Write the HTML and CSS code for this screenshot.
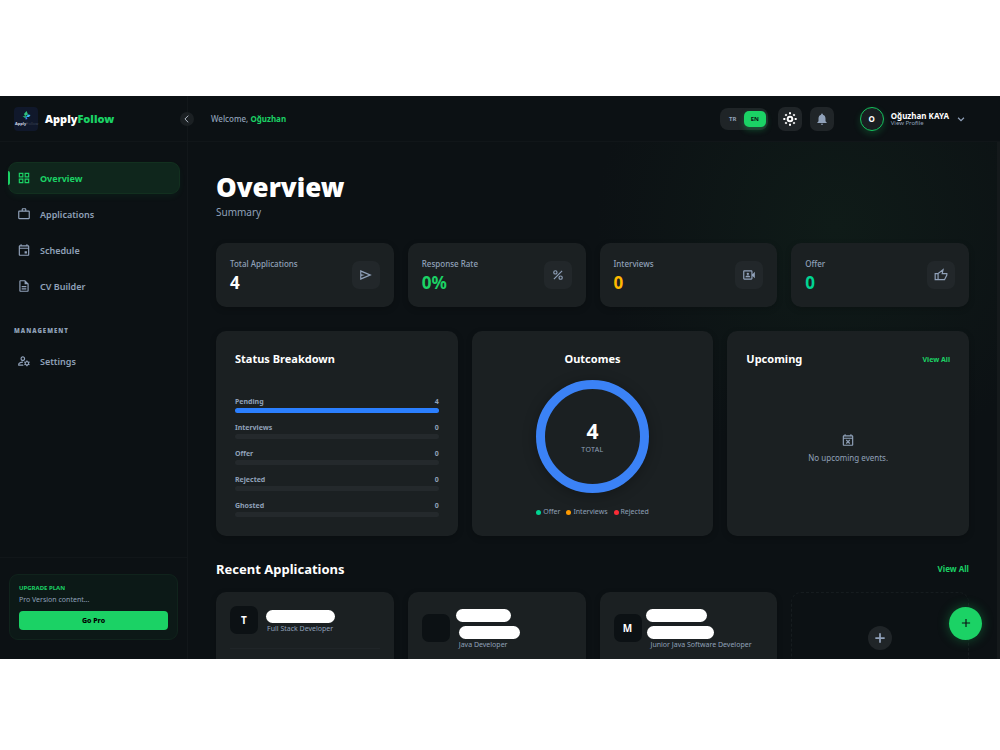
FILE: index.html
```html
<!DOCTYPE html>
<html lang="en">
<head>
  <meta charset="UTF-8">
  <meta name="viewport" content="width=device-width, initial-scale=1">
  <title>ApplyFollow - Overview</title>
  <link rel="stylesheet" href="styles.css">
</head>
<body>
  <div class="app">
    <aside class="sidebar">
      <div class="brand">
        <div class="brand-logo">
          <svg viewBox="0 0 24 24" width="24" height="24">
            <path d="M12.500 4l1.500 3.500-3 1.500-1-2z" fill="#2fc47c"/>
            <path d="M14 7.500l2.500 .5-1.500 2h-3z" fill="#38bdf8"/>
            <path d="M8.500 9h4l-1 2.500z" fill="#22a06b"/>
            <path d="M12 9l1.500 3-2 .5z" fill="#3b82f6"/>
          </svg>
          <span class="brand-mini"><b>Apply</b>Follow</span>
        </div>
        <span class="brand-name">Apply<span class="green">Follow</span></span>
        <button class="collapse" aria-label="Collapse sidebar">
          <svg viewBox="0 0 24 24" width="10" height="10" class="line"><path d="M15 4l-8 8 8 8"/></svg>
        </button>
      </div>

      <nav class="nav">
        <a href="#" class="nav-item active">
          <svg viewBox="0 0 24 24" width="14" height="14"><path d="M3 3v8h8V3H3zm6 6H5V5h4v4zm-6 4v8h8v-8H3zm6 6H5v-4h4v4zm4-16v8h8V3h-8zm6 6h-4V5h4v4zm-6 4v8h8v-8h-8zm6 6h-4v-4h4v4z"/></svg>
          Overview
        </a>
        <a href="#" class="nav-item">
          <svg viewBox="0 0 24 24" width="14" height="14"><path d="M14 6V4h-4v2h4zM4 8v11h16V8H4zm16-2c1.110 0 2 .89 2 2v11c0 1.110-.89 2-2 2H4c-1.110 0-2-.89-2-2V8c0-1.110.89-2 2-2h4V4c0-1.110.89-2 2-2h4c1.110 0 2 .89 2 2v2h4z"/></svg>
          Applications
        </a>
        <a href="#" class="nav-item">
          <svg viewBox="0 0 24 24" width="14" height="14"><path d="M19 4h-1V2h-2v2H8V2H6v2H5c-1.100 0-2 .9-2 2v14c0 1.100.9 2 2 2h14c1.100 0 2-.9 2-2V6c0-1.100-.9-2-2-2zm0 16H5V10h14v10zm0-12H5V6h14v2zm-6 6h4v4h-4z"/></svg>
          Schedule
        </a>
        <a href="#" class="nav-item">
          <svg viewBox="0 0 24 24" width="14" height="14"><path d="M8 16h8v2H8zm0-4h8v2H8zm6-10H6c-1.100 0-2 .9-2 2v16c0 1.100.9 2 2 2h12c1.100 0 2-.9 2-2V8l-6-6zm4 18H6V4h7v5h5v11z"/></svg>
          CV Builder
        </a>
        <h4 class="nav-label">MANAGEMENT</h4>
        <a href="#" class="nav-item">
          <svg viewBox="0 0 24 24" width="14" height="14"><path d="M4 18v-.65c0-.34.16-.66.41-.81C6.100 15.530 8.030 15 10 15h.08c.1-.7.3-1.370.59-1.980-.22-.02-.44-.03-.67-.03-2.420 0-4.680.67-6.610 1.820-.88.52-1.390 1.500-1.390 2.530V20h9.260c-.42-.6-.75-1.280-.97-2H4zM10 12c2.210 0 4-1.790 4-4s-1.790-4-4-4-4 1.790-4 4 1.790 4 4 4zm0-6c1.100 0 2 .9 2 2s-.9 2-2 2-2-.9-2-2 .9-2 2-2zM20.750 16c0-.22-.03-.42-.06-.63l1.140-1.010-1-1.730-1.450.49c-.32-.27-.68-.48-1.080-.63L18 11h-2l-.3 1.490c-.4.15-.76.36-1.080.63l-1.450-.49-1 1.730 1.140 1.010c-.03.21-.06.41-.06.63s.03.42.06.63l-1.140 1.010 1 1.730 1.450-.49c.32.27.68.48 1.080.63L16 21h2l.3-1.490c.4-.15.76-.36 1.080-.63l1.450.49 1-1.730-1.140-1.010c.03-.21.06-.41.06-.63zM17 18c-1.100 0-2-.9-2-2s.9-2 2-2 2 .9 2 2-.9 2-2 2z"/></svg>
          Settings
        </a>
      </nav>

      <div class="sidebar-foot">
        <div class="upgrade">
          <strong>UPGRADE PLAN</strong>
          <p>Pro Version content...</p>
          <button class="go-pro">Go Pro</button>
        </div>
      </div>
    </aside>

    <div class="page">
      <header class="topbar">
        <span class="welcome">Welcome, <b>Oğuzhan</b></span>
        <div class="lang">
          <button>TR</button>
          <button class="on">EN</button>
        </div>
        <button class="icon-btn light" aria-label="Theme">
          <svg viewBox="0 0 24 24" width="16" height="16" class="line bold"><circle cx="12" cy="12" r="3.500"/><path d="M12 2v3M12 19v3M2 12h3M19 12h3M5 5l2 2M17 17l2 2M5 19l2-2M17 7l2-2"/></svg>
        </button>
        <button class="icon-btn" aria-label="Notifications">
          <svg viewBox="0 0 24 24" width="14" height="14"><path d="M12 22c1.100 0 2-.9 2-2h-4c0 1.100.9 2 2 2zm6-6v-5c0-3.070-1.630-5.640-4.500-6.320V4c0-.83-.67-1.500-1.500-1.500s-1.500.67-1.500 1.500v.68C7.640 5.360 6 7.920 6 11v5l-2 2v1h16v-1l-2-2z"/></svg>
        </button>
        <a href="#" class="profile">
          <span class="avatar">O</span>
          <span class="who">
            <b>Oğuzhan KAYA</b>
            <small>View Profile</small>
          </span>
          <svg viewBox="0 0 24 24" width="10" height="10" class="line bold"><path d="M5 9l7 7 7-7"/></svg>
        </a>
      </header>

      <main class="content">
        <h1>Overview</h1>
        <p class="subtitle">Summary</p>

        <section class="stats">
          <div class="card stat">
            <div>
              <h3>Total Applications</h3>
              <strong>4</strong>
            </div>
            <span class="tile"><svg viewBox="0 0 24 24" width="14" height="14"><path d="M2 20.500v-17l20 8.500-20 8.500zm2-3.300L16.500 12 4 6.800v3.700l6 1.500-6 1.500v3.700z"/></svg></span>
          </div>
          <div class="card stat">
            <div>
              <h3>Response Rate</h3>
              <strong class="green">0%</strong>
            </div>
            <span class="tile"><svg viewBox="0 0 24 24" width="14" height="14" class="line"><circle cx="7.500" cy="7.500" r="2.800"/><circle cx="16.500" cy="16.500" r="2.800"/><path d="M19 5L5 19"/></svg></span>
          </div>
          <div class="card stat">
            <div>
              <h3>Interviews</h3>
              <strong class="amber">0</strong>
            </div>
            <span class="tile"><svg viewBox="0 0 24 24" width="14" height="14"><path d="M4 4h12c1.100 0 2 .9 2 2v4.500l4-4v11l-4-4V18c0 1.100-.9 2-2 2H4c-1.100 0-2-.9-2-2V6c0-1.100.9-2 2-2zm0 2v12h12V6H4zm2 10v-1c0-1.300 2.700-2 4-2s4 .7 4 2v1H6z"/><circle cx="10" cy="10" r="2"/></svg></span>
          </div>
          <div class="card stat">
            <div>
              <h3>Offer</h3>
              <strong class="teal">0</strong>
            </div>
            <span class="tile"><svg viewBox="0 0 24 24" width="14" height="14" class="line"><path d="M7 9.500H2V20h5M7 9.500V20h11l4-8V9.500h-8L15.500 3 7 9.500z"/></svg></span>
          </div>
        </section>

        <section class="panels">
          <div class="card panel">
            <h2>Status Breakdown</h2>
            <ul class="bars">
              <li><span>Pending</span><span>4</span><div class="bar"><i style="width: 100%"></i></div></li>
              <li><span>Interviews</span><span>0</span><div class="bar"></div></li>
              <li><span>Offer</span><span>0</span><div class="bar"></div></li>
              <li><span>Rejected</span><span>0</span><div class="bar"></div></li>
              <li><span>Ghosted</span><span>0</span><div class="bar"></div></li>
            </ul>
          </div>
          <div class="card panel outcomes">
            <h2>Outcomes</h2>
            <div class="donut">
              <strong>4</strong>
              <span>TOTAL</span>
            </div>
            <ul class="legend">
              <li class="l-offer">Offer</li>
              <li class="l-interviews">Interviews</li>
              <li class="l-rejected">Rejected</li>
            </ul>
          </div>
          <div class="card panel upcoming">
            <div class="panel-head">
              <h2>Upcoming</h2>
              <a href="#">View All</a>
            </div>
            <div class="empty">
              <svg viewBox="0 0 24 24" width="14" height="14"><path d="M19 4h-1V2h-2v2H8V2H6v2H5c-1.100 0-2 .9-2 2v14c0 1.100.9 2 2 2h14c1.100 0 2-.9 2-2V6c0-1.100-.9-2-2-2zm0 16H5V10h14v10zm0-12H5V6h14v2z"/><path d="M9 12l6 6M15 12l-6 6" stroke="currentColor" stroke-width="2"/></svg>
              <p>No upcoming events.</p>
            </div>
          </div>
        </section>

        <div class="recent-head">
          <h2>Recent Applications</h2>
          <a href="#">View All</a>
        </div>
        <section class="recent">
          <article class="card job">
            <div class="job-top">
              <span class="job-logo">T</span>
              <div class="job-info">
                <span class="redact r1"></span>
                <p>Full Stack Developer</p>
              </div>
            </div>
            <hr>
          </article>
          <article class="card job">
            <div class="job-top">
              <span class="job-logo"></span>
              <div class="job-info two">
                <span class="redact r2"></span>
                <span class="redact r3"></span>
                <p>Java Developer</p>
              </div>
            </div>
            <hr>
          </article>
          <article class="card job">
            <div class="job-top">
              <span class="job-logo">M</span>
              <div class="job-info two">
                <span class="redact r4"></span>
                <span class="redact r5"></span>
                <p>Junior Java Software Developer</p>
              </div>
            </div>
            <hr>
          </article>
          <button class="add-new">
            <span><svg viewBox="0 0 24 24" width="14" height="14" class="line bold"><path d="M12 4v16M4 12h16"/></svg></span>
            New
          </button>
        </section>
      </main>
    </div>

    <button class="fab" aria-label="Add application">
      <svg viewBox="0 0 24 24" width="14" height="14" class="line"><path d="M12 5v14M5 12h14"/></svg>
    </button>
  </div>
</body>
</html>
```
FILE: styles.css
```css
* {
  box-sizing: border-box;
  margin: 0;
  padding: 0;
}

body {
  font-family: 'Noto Sans', sans-serif;
  background: #fff;
  color: #fff;
  padding: 96px 0 0;
}

a {
  color: #1bd265;
  text-decoration: none;
}

button {
  font-family: inherit;
  border: none;
  cursor: pointer;
}

ul {
  list-style: none;
}

svg {
  display: block;
  fill: currentColor;
  flex-shrink: 0;
}

.line {
  fill: none;
  stroke: currentColor;
  stroke-width: 2;
}

.line.bold {
  stroke-width: 3;
}

.green { color: #1bd265; }
.amber { color: #ffb900; }
.teal { color: #00d492; }

.app {
  position: relative;
  display: flex;
  aspect-ratio: 16 / 9;
  overflow: hidden;
  background: #0c1114;
}

/* sidebar */
.sidebar {
  width: 188px;
  flex-shrink: 0;
  display: flex;
  flex-direction: column;
  border-right: 1px solid #12171a;
}

.brand {
  height: 46px;
  display: flex;
  align-items: center;
  padding-left: 14px;
  border-bottom: 1px solid #111619;
}

.brand-logo {
  width: 24px;
  height: 24px;
  border-radius: 4px;
  background: #10182b;
  position: relative;
}

.brand-mini {
  position: absolute;
  left: 1px;
  bottom: 5px;
  font-size: 4px;
  line-height: 5px;
  color: #3c4658;
}

.brand-mini b {
  color: #cbd5e1;
}

.brand-name {
  margin-left: 7px;
  font-size: 11px;
  font-weight: 900;
}

.collapse {
  width: 14px;
  height: 14px;
  margin: 0 -7px 0 auto;
  display: grid;
  place-items: center;
  border-radius: 50%;
  background: #1b2023;
  color: #cbd5e1;
}

.nav {
  flex: 1;
  display: flex;
  flex-direction: column;
  gap: 4px;
  padding: 20px 7px 0 8px;
}

.nav-item {
  height: 32px;
  display: flex;
  align-items: center;
  gap: 9px;
  padding-left: 9px;
  border-radius: 9px;
  font-size: 9px;
  font-weight: 600;
  color: #90a1b9;
}

.nav-item.active {
  color: #1bd265;
  font-weight: 700;
  background: #0f261c;
  border: 1px solid #12301f;
  padding-left: 8px;
  box-shadow: 0 3px 6px rgba(27, 210, 101, 0.05);
  position: relative;
}

.nav-item.active::before {
  content: "";
  position: absolute;
  left: -1px;
  top: 8px;
  width: 2px;
  height: 14px;
  border-radius: 0 2px 2px 0;
  background: #1bd265;
}

.nav-label {
  margin: 20px 0 5px 6px;
  font-size: 6px;
  line-height: 10px;
  font-weight: 900;
  letter-spacing: 1px;
  color: #90a1b9;
}

.sidebar-foot {
  padding: 16px 9px 19px;
  border-top: 1px solid #111619;
}

.upgrade {
  padding: 9px;
  border: 1px solid #10231c;
  border-radius: 9px;
  background: #0c1917;
}

.upgrade strong {
  display: block;
  font-size: 6px;
  line-height: 9px;
  font-weight: 700;
  color: #1bd265;
}

.upgrade p {
  margin: 2px 0 6px;
  font-size: 7px;
  line-height: 10px;
  color: #90a1b9;
}

.go-pro {
  display: block;
  width: 100%;
  height: 19px;
  border-radius: 4px;
  background: #1bd265;
  color: #000;
  font-size: 7px;
  font-weight: 800;
}

/* top bar */
.page {
  flex: 1;
  min-width: 0;
}

.topbar {
  height: 46px;
  display: flex;
  align-items: center;
  padding: 0 34px 0 23px;
  border-bottom: 1px solid #111619;
}

.welcome {
  margin-right: auto;
  font-size: 8px;
  font-weight: 500;
  color: #90a1b9;
}

.welcome b {
  color: #1bd265;
}

.lang {
  display: flex;
  margin-right: 2px;
  padding: 3px 2px;
  border-radius: 8px;
  background: #1f2427;
}

.lang button {
  width: 22px;
  height: 16px;
  border-radius: 5px;
  background: none;
  color: #90a1b9;
  font-size: 6px;
  font-weight: 700;
}

.lang .on {
  background: #1bd265;
  color: #0c1114;
  box-shadow: 0 3px 6px rgba(27, 210, 101, 0.3);
}

.icon-btn {
  width: 24px;
  height: 24px;
  margin-left: 8px;
  display: grid;
  place-items: center;
  border-radius: 7px;
  background: #202528;
  color: #90a1b9;
}

.icon-btn.light {
  color: #fff;
}

.profile {
  display: flex;
  align-items: center;
  margin-left: 26px;
  color: #90a1b9;
}

.avatar {
  width: 24px;
  height: 24px;
  display: grid;
  place-items: center;
  border: 1px solid #14c25c;
  border-radius: 50%;
  background: #191e21;
  color: #fff;
  font-size: 8px;
  font-weight: 700;
  box-shadow: 0 3px 7px rgba(27, 210, 101, 0.2);
}

.who {
  margin: 0 7px;
}

.who b,
.who small {
  display: block;
}

.who b {
  color: #fff;
  font-size: 8px;
  line-height: 9px;
}

.who small {
  font-size: 6px;
  line-height: 7px;
}

/* content */
.content {
  height: 100%;
  padding: 28px 28px 0;
  border-right: 3px solid #14191b;
  background: radial-gradient(circle at 80% 15%, #0f1b18 0, #0c1114 240px);
}

h1 {
  font-size: 26px;
  line-height: 34px;
  font-weight: 900;
}

.subtitle {
  font-size: 10px;
  line-height: 16px;
  color: #90a1b9;
}

h2 {
  font-size: 11px;
  line-height: 16px;
  font-weight: 700;
}

.card {
  border-radius: 10px;
  background: #1b2022;
  box-shadow: 0 2px 6px rgba(0, 0, 0, 0.2);
}

.stats,
.recent {
  display: grid;
  grid-template-columns: repeat(4, 1fr);
  gap: 14px;
}

.stats {
  margin-top: 23px;
}

.stat {
  height: 64px;
  display: flex;
  align-items: center;
  justify-content: space-between;
  padding: 0 14px;
}

.stat > div {
  padding-top: 4px;
}

.stat h3 {
  font-size: 8px;
  line-height: 12px;
  font-weight: 500;
  color: #90a1b9;
}

.stat strong {
  display: block;
  font-size: 17px;
  line-height: 26px;
}

.tile {
  width: 28px;
  height: 28px;
  display: grid;
  place-items: center;
  border-radius: 7px;
  background: #22272a;
  color: #90a1b9;
}

.panels {
  display: grid;
  grid-template-columns: repeat(3, 1fr);
  gap: 14px;
  margin-top: 24px;
}

.panel {
  height: 205px;
  padding: 20px 19px 16px;
}

.bars {
  margin-top: 29px;
}

.bars li {
  display: flex;
  flex-wrap: wrap;
  justify-content: space-between;
  margin-bottom: 9px;
  font-size: 7px;
  line-height: 12px;
  font-weight: 700;
  color: #90a1b9;
}

.bar {
  width: 100%;
  height: 5px;
  border-radius: 3px;
  background: #24292c;
}

.bar i {
  display: block;
  height: 100%;
  border-radius: 3px;
  background: #2b7fff;
}

.outcomes {
  display: flex;
  flex-direction: column;
  align-items: center;
}

.donut {
  width: 113px;
  height: 113px;
  flex-shrink: 0;
  margin-top: 13px;
  padding-top: 28px;
  border: 9px solid #3b82f6;
  border-radius: 50%;
  text-align: center;
  box-shadow: 0 2px 14px rgba(0, 0, 0, 0.3);
}

.donut strong {
  display: block;
  font-size: 21px;
  line-height: 28px;
}

.donut span {
  display: block;
  font-size: 7px;
  line-height: 10px;
  letter-spacing: 0.05em;
  color: #90a1b9;
}

.legend {
  display: flex;
  gap: 6px;
  margin-top: 13px;
  font-size: 7px;
  line-height: 12px;
  color: #90a1b9;
}

.legend li {
  display: flex;
  align-items: center;
  gap: 2px;
}

.legend li::before {
  content: "";
  width: 5px;
  height: 5px;
  border-radius: 50%;
  background: currentColor;
}

.l-offer::before { color: #00d492; }
.l-interviews::before { color: #fe9a00; }
.l-rejected::before { color: #fb2c36; }

.upcoming {
  display: flex;
  flex-direction: column;
}

.panel-head,
.recent-head {
  display: flex;
  align-items: center;
  justify-content: space-between;
}

.panel-head a {
  font-size: 7px;
  font-weight: 700;
}

.empty {
  flex: 1;
  display: flex;
  flex-direction: column;
  align-items: center;
  justify-content: center;
  gap: 4px;
  padding-top: 10px;
  font-size: 8px;
  line-height: 14px;
  color: #90a1b9;
}

.recent-head {
  margin: 23px 0 13px;
}

.recent-head h2 {
  font-size: 13px;
  line-height: 20px;
}

.recent-head a {
  font-size: 8px;
  line-height: 16px;
  font-weight: 700;
}

.job {
  height: 120px;
  padding: 14px;
}

.job-top {
  display: flex;
  align-items: center;
  gap: 8px;
}

.job-logo {
  width: 28px;
  height: 28px;
  flex-shrink: 0;
  display: grid;
  place-items: center;
  border-radius: 7px;
  background: #0c1114;
  font-size: 10px;
  font-weight: 700;
}

.job-info {
  padding-top: 4px;
}

.job-info.two {
  padding-top: 3px;
}

.job-info p {
  padding-left: 1px;
  font-size: 7px;
  line-height: 11px;
  color: #90a1b9;
  white-space: nowrap;
}

.redact {
  display: block;
  height: 13px;
  border-radius: 7px;
  background: #fff;
}

.two .redact {
  margin-bottom: 4px;
}

.two .redact + .redact {
  margin-bottom: 0;
}

.r1 { width: 69px; }
.r2 { width: 55px; margin-left: -2px; }
.r3 { width: 61px; margin-left: 1px; }
.r4 { width: 61px; margin-left: -4px; }
.r5 { width: 67px; margin-left: -3px; }

.job hr {
  margin-top: 14px;
  border: none;
  border-top: 1px solid #202528;
}

.add-new {
  display: flex;
  flex-direction: column;
  align-items: center;
  gap: 6px;
  padding-top: 33px;
  border: 1px dashed #161c1f;
  border-radius: 10px;
  background: none;
  color: #90a1b9;
  font-size: 8px;
  font-weight: 700;
}

.add-new span {
  width: 24px;
  height: 24px;
  display: grid;
  place-items: center;
  border-radius: 50%;
  background: #202528;
}

.fab {
  position: absolute;
  right: 18px;
  bottom: 19px;
  width: 33px;
  height: 33px;
  display: grid;
  place-items: center;
  border-radius: 50%;
  background: #1bd265;
  color: #0c1114;
  box-shadow: 0 0 12px rgba(27, 210, 101, 0.35);
}
```
